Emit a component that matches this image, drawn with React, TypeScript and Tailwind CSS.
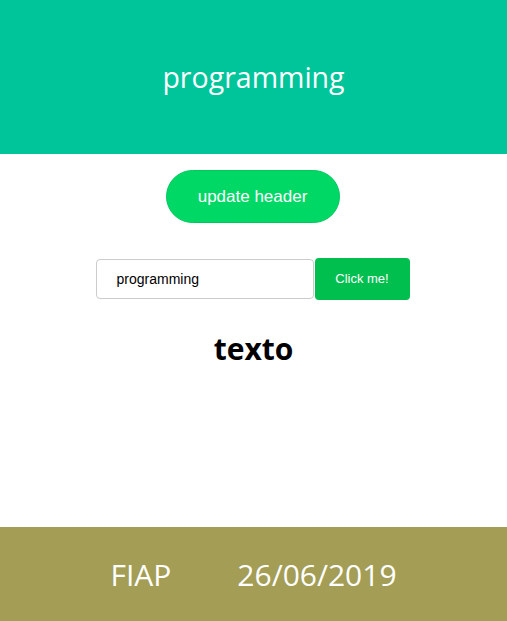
import { useState } from 'react';

export default function App() {
  const [header, setHeader] = useState('programming');
  const [value, setValue] = useState('programming');

  return (
    <div className="flex min-h-[621px] flex-col bg-white">
      <header className="flex h-[154px] items-center justify-center bg-[#00c59b]">
        <h1 className="font-['Open_Sans',sans-serif] text-[28.5px] text-white">{header}</h1>
      </header>

      <main className="flex flex-1 flex-col items-center">
        <button
          className="mt-[16px] h-[53px] w-[174px] -translate-x-px rounded-full border border-[#00c95c] bg-[#00d866] font-['Liberation_Sans',sans-serif] text-[17px] text-white"
          onClick={() => setHeader(value)}
        >
          update header
        </button>

        <div className="mt-[35px] flex -translate-x-px items-center">
          <input
            className="h-[40px] w-[218px] rounded-[4px] border border-[#cccccc] px-[20px] font-['Liberation_Sans',sans-serif] text-[14px] text-black outline-none"
            value={value}
            onChange={(e) => setValue(e.target.value)}
          />
          <button className="ml-px h-[42px] w-[95px] rounded-[4px] bg-[#00bf4f] font-['Liberation_Sans',sans-serif] text-[13px] text-white">
            Click me!
          </button>
        </div>

        <h2 className="mt-[26px] font-['Open_Sans',sans-serif] text-[30px] font-bold text-black">texto</h2>
      </main>

      <footer className="flex h-[94px] items-center justify-center gap-[66px] bg-[#a39d55] font-['Open_Sans',sans-serif] text-[30px] text-white">
        <span>FIAP</span>
        <span>26/06/2019</span>
      </footer>
    </div>
  );
}
